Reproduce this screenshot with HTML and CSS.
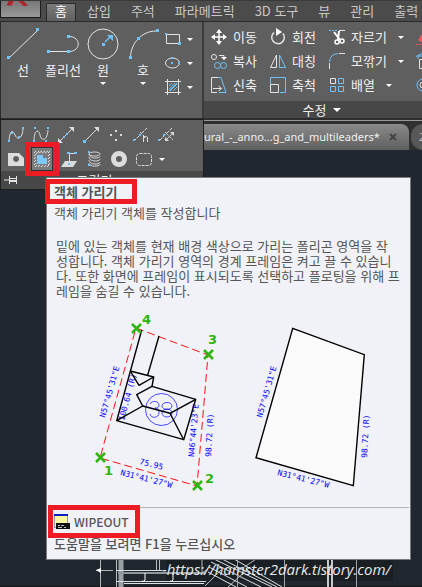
FILE: index.html
```html
<!DOCTYPE html>
<html lang="ko">
<head>
    <meta charset="UTF-8">
    <meta name="viewport" content="width=device-width, initial-scale=1">
    <title>객체 가리기</title>
    <link rel="stylesheet" href="styles.css">
</head>
<body>
    <header class="menu-bar">
        <button class="app-button" aria-label="응용프로그램 메뉴">
            <svg width="40" height="18" viewBox="0 0 40 18">
                <path d="M6 0h6l-2 5H4zM16 0h7l5 5-5 1z" fill="#a3282c"/>
                <path d="M12 0l-2 5M17 0l5 5" stroke="#d8585a" stroke-width="1"/>
            </svg>
        </button>
        <nav class="tabs">
            <a class="tab active" href="#">홈</a>
            <a class="tab" href="#">삽입</a>
            <a class="tab" href="#">주석</a>
            <a class="tab" href="#">파라메트릭</a>
            <a class="tab" href="#">3D 도구</a>
            <a class="tab" href="#">뷰</a>
            <a class="tab" href="#">관리</a>
            <a class="tab" href="#">출력</a>
        </nav>
    </header>

    <section class="ribbon">
        <div class="panel draw-panel">
            <button class="big-tool">
                <svg width="34" height="34" viewBox="0 0 34 34">
                    <path d="M3 31L32 3" stroke="#e4e4e4"/>
                    <path d="M1 29h3v3h-3zM30 1h3v3h-3z" fill="#6fc3fa"/>
                </svg>
                <span>선</span>
            </button>
            <button class="big-tool">
                <svg width="34" height="34" viewBox="0 0 34 34">
                    <path d="M3 24.500h20M24 9.500c11 1 11 14 0 15" stroke="#e4e4e4" fill="none"/>
                    <path d="M1 23h3v3h-3zM21 23h3v3h-3zM21 8h3v3h-3z" fill="#6fc3fa"/>
                </svg>
                <span>폴리선</span>
            </button>
            <button class="big-tool">
                <svg width="34" height="34" viewBox="0 0 34 34">
                    <circle cx="17" cy="17" r="15" stroke="#e4e4e4" fill="none"/>
                    <path d="M19 15l5-5" stroke="#6fc3fa" stroke-width="1.500"/>
                    <path d="M16 16h3v3h-3zM21 8h6v6z" fill="#6fc3fa"/>
                </svg>
                <span>원</span>
                <i class="arrow"></i>
            </button>
            <button class="big-tool">
                <svg width="34" height="34" viewBox="0 0 34 34">
                    <path d="M4.500 30C5 16 16 4 30 4" stroke="#e4e4e4" fill="none"/>
                    <path d="M3 29h3v3h-3zM11 10h3v3h-3zM30 2h3v3h-3z" fill="#6fc3fa"/>
                </svg>
                <span>호</span>
                <i class="arrow"></i>
            </button>
            <div class="small-tools">
                <button class="small-tool" aria-label="직사각형">
                    <svg width="18" height="18" viewBox="0 0 18 18">
                        <path d="M2.500 4.500h13v9h-13z" stroke="#e4e4e4" fill="none"/>
                        <path d="M1 3h2v2H1zM14 12h3v3h-3z" fill="#6fc3fa"/>
                    </svg>
                    <i class="arrow"></i>
                </button>
                <button class="small-tool" aria-label="타원">
                    <svg width="18" height="18" viewBox="0 0 18 18">
                        <ellipse cx="8.500" cy="9" rx="7" ry="5" stroke="#e4e4e4" fill="none"/>
                        <path d="M7 3h2v2H7zM7 8h2v2H7zM14 8h2v2h-2z" fill="#6fc3fa"/>
                    </svg>
                    <i class="arrow"></i>
                </button>
                <button class="small-tool" aria-label="해치">
                    <svg width="18" height="18" viewBox="0 0 18 18">
                        <path d="M1 3.500h16M1 14.500h16M3.500 1v16M14.500 1v16" stroke="#e4e4e4"/>
                        <path d="M5 8l3-3M5 11l6-6M6 13l7-7M9 13l4-4M5 13l8-8" stroke="#6fc3fa"/>
                    </svg>
                    <i class="arrow"></i>
                </button>
            </div>

            <div class="draw-flyout">
                <div class="flyout-row">
                    <button class="fly-tool" aria-label="스플라인 맞춤">
                        <svg width="18" height="18" viewBox="0 0 18 18">
                            <path d="M2 15C3 3 6 4 8 9s7 5 8-6" stroke="#dcdcdc" fill="none"/>
                            <path d="M1 14h2v2H1zM4 6h2v2H4zM11 10h2v2h-2zM15 1h2v2h-2z" fill="#6fc3fa"/>
                        </svg>
                    </button>
                    <button class="fly-tool" aria-label="스플라인 CV">
                        <svg width="18" height="18" viewBox="0 0 18 18">
                            <path d="M2 15C2 3 7 3 8 9s7 7 8-5" stroke="#dcdcdc" fill="none"/>
                            <path d="M1 14h2v2H1zM2 1h2v2H2zM15 1h2v2h-2zM13 14h2v2h-2z" fill="#6fc3fa"/>
                        </svg>
                    </button>
                    <button class="fly-tool" aria-label="구성선">
                        <svg width="18" height="18" viewBox="0 0 18 18">
                            <path d="M2 16L16 2" stroke="#dcdcdc"/>
                            <path d="M1 17v-5l5 5zM17 1v5l-5-5z" fill="#dcdcdc"/>
                            <path d="M6 10h2v2H6zM9 7h2v2H9z" fill="#6fc3fa"/>
                        </svg>
                    </button>
                    <button class="fly-tool" aria-label="광선">
                        <svg width="18" height="18" viewBox="0 0 18 18">
                            <path d="M3 15L16 2" stroke="#dcdcdc"/>
                            <path d="M17 1v5l-5-5z" fill="#dcdcdc"/>
                            <path d="M1 14h3v3H1z" fill="#6fc3fa"/>
                        </svg>
                    </button>
                    <button class="fly-tool" aria-label="다중점">
                        <svg width="18" height="18" viewBox="0 0 18 18">
                            <path d="M8 4h2v2H8zM8 13h2v2H8zM3 8h2v2H3zM13 8h2v2h-2z" fill="#dcdcdc"/>
                        </svg>
                    </button>
                    <button class="fly-tool" aria-label="등분할">
                        <svg width="18" height="18" viewBox="0 0 18 18">
                            <path d="M2 15l5-5M10 7l5-5M8 6l6 6" stroke="#dcdcdc" stroke-dasharray="3 1"/>
                            <path d="M11.500 16v-6M11.500 12q4-3 4 0v4" stroke="#dcdcdc" fill="none"/>
                            <path d="M1 13h2v2H1zM7 8h2v2H7z" fill="#6fc3fa"/>
                        </svg>
                    </button>
                    <button class="fly-tool" aria-label="길이분할">
                        <svg width="18" height="18" viewBox="0 0 18 18">
                            <path d="M2 15L15 2M8 6l8 8M9 14l7-7" stroke="#dcdcdc" stroke-dasharray="4 1"/>
                            <path d="M8 15v-4l4 4zM17 6v4l-4-4z" fill="#dcdcdc"/>
                            <path d="M1 13h2v2H1zM6 8h2v2H6z" fill="#6fc3fa"/>
                        </svg>
                    </button>
                </div>
                <div class="flyout-row">
                    <button class="fly-tool" aria-label="영역">
                        <svg width="18" height="18" viewBox="0 0 18 18">
                            <path fill-rule="evenodd" d="M1 3h11l5 5v8H1zM9 6a3 3 0 1 0 .1 0z" fill="#dcdcdc"/>
                        </svg>
                    </button>
                    <button class="fly-tool wipeout marked" aria-label="객체 가리기">
                        <svg width="18" height="18" viewBox="0 0 18 18">
                            <path d="M1 3l2-2M1 6l5-5M6 3l3-2M9 3l3-2M12 3l3-2M15 3l2-2M1 9l2-2M1 12l2-2M1 15l2-2M15 6l2-2M15 9l2-2M15 12l2-2M15 15l2-2M2 17l2-2M5 17l2-2M8 17l2-2M11 17l2-2M14 17l2-2" stroke="#dcdcdc"/>
                            <path d="M4 5h6v3h4v6H4z" fill="#7cc8fb"/>
                        </svg>
                    </button>
                    <button class="fly-tool" aria-label="3D 폴리선">
                        <svg width="18" height="18" viewBox="0 0 18 18">
                            <path d="M5 11h12l-4 6H1z" fill="#dcdcdc"/>
                            <path d="M9.500 13V3.500h6" stroke="#dcdcdc" fill="none"/>
                            <path d="M7 2h3v2H7zM14 2h3v2h-3zM8 13h2v2H8z" fill="#6fc3fa"/>
                        </svg>
                    </button>
                    <button class="fly-tool" aria-label="나선">
                        <svg width="18" height="18" viewBox="0 0 18 18">
                            <g stroke="#dcdcdc" fill="none">
                                <ellipse cx="9.500" cy="4" rx="5.500" ry="2"/>
                                <path d="M4 4c0 5 11 5 11 2M4 7c0 5 11 5 11 2M4 10c0 5 11 5 11 2M4 13c0 4 11 4 11 1"/>
                            </g>
                            <path d="M3 1h2v2H3zM3 14h2v2H3z" fill="#6fc3fa"/>
                        </svg>
                    </button>
                    <button class="fly-tool" aria-label="도넛">
                        <svg width="18" height="18" viewBox="0 0 18 18">
                            <circle cx="9" cy="9" r="5.500" stroke="#dcdcdc" stroke-width="5" fill="none"/>
                        </svg>
                    </button>
                    <button class="fly-tool" aria-label="구름형 수정기호">
                        <svg width="18" height="18" viewBox="0 0 18 18">
                            <rect x="1.500" y="3.500" width="15" height="12" rx="3" stroke="#dcdcdc" fill="none" stroke-dasharray="3 1"/>
                        </svg>
                    </button>
                    <i class="arrow"></i>
                </div>
                <div class="flyout-title">
                    <svg class="pin" width="14" height="10" viewBox="0 0 14 10">
                        <path d="M0 5h5" stroke="#e4e4e4"/>
                        <path d="M5.500 1v8M12.500 1v8M6 3.500h6M6 6.500h6M6 5.500h6" stroke="#e4e4e4" fill="none"/>
                    </svg>
                    <span>그리기</span>
                </div>
            </div>
        </div>

        <div class="panel modify-panel">
            <div class="modify-grid">
                <button class="tool">
                    <svg width="16" height="18" viewBox="0 0 16 18">
                        <path d="M8 3v12M2 9h12" stroke="#fff" stroke-width="1.500"/>
                        <path d="M8 1l3 4H5zM8 17l3-4H5zM0 9l4-3v6zM16 9l-4-3v6z" fill="#fff"/>
                    </svg>
                    <span>이동</span>
                </button>
                <button class="tool">
                    <svg width="16" height="18" viewBox="0 0 16 18">
                        <path d="M4 4.500a6.300 6.300 0 1 0 9 1" stroke="#e4e4e4" stroke-width="1.500" fill="none"/>
                        <path d="M6 0l6 4-6 4z" fill="#fff"/>
                    </svg>
                    <span>회전</span>
                </button>
                <button class="tool">
                    <svg width="16" height="18" viewBox="0 0 16 18">
                        <path d="M0 2.500h9" stroke="#6fc3fa" stroke-dasharray="2 1"/>
                        <path d="M10 2.500h6" stroke="#e4e4e4"/>
                        <path d="M5 4l6 8M10 3l-1 9" stroke="#fff" stroke-width="2"/>
                        <circle cx="8" cy="14" r="2" stroke="#fff" stroke-width="1.500" fill="none"/>
                        <circle cx="13" cy="13" r="2" stroke="#fff" stroke-width="1.500" fill="none"/>
                    </svg>
                    <span>자르기</span>
                    <i class="arrow"></i>
                </button>
                <button class="tool" aria-label="지우기">
                    <svg width="16" height="18" viewBox="0 0 16 18">
                        <path d="M2 12l6-9h8v8l-6 6z" fill="#f0575c"/>
                        <path d="M0 16.500h8" stroke="#f0575c" stroke-dasharray="2 1"/>
                    </svg>
                </button>

                <button class="tool">
                    <svg width="16" height="18" viewBox="0 0 16 18">
                        <g stroke="#e4e4e4" fill="none"><circle cx="3" cy="5" r="2.500"/><path d="M8 3.500h5v4"/></g>
                        <path d="M10 5h6l-3 3z" fill="#fff"/>
                        <g stroke="#6fc3fa" fill="none"><circle cx="6.500" cy="13.500" r="3"/><circle cx="12.500" cy="13.500" r="3"/></g>
                    </svg>
                    <span>복사</span>
                </button>
                <button class="tool">
                    <svg width="16" height="18" viewBox="0 0 16 18">
                        <path d="M6.500 3v12.500h-6z" stroke="#e4e4e4" fill="none"/>
                        <path d="M9.500 3v12.500h6z" stroke="#6fc3fa" fill="none"/>
                    </svg>
                    <span>대칭</span>
                </button>
                <button class="tool">
                    <svg width="16" height="18" viewBox="0 0 16 18">
                        <path d="M.5 10Q1 2 9 1.500" stroke="#6fc3fa" fill="none"/>
                        <path d="M.5 11v6M10 1.500h6" stroke="#e4e4e4"/>
                    </svg>
                    <span>모깎기</span>
                    <i class="arrow"></i>
                </button>
                <button class="tool" aria-label="분해">
                    <svg width="16" height="18" viewBox="0 0 16 18">
                        <path d="M3.500 7.500h10v9h-10z" stroke="#e4e4e4" fill="none"/>
                        <path d="M0 4.500l6-3M2 7V4h10" stroke="#6fc3fa" fill="none"/>
                    </svg>
                </button>

                <button class="tool">
                    <svg width="16" height="18" viewBox="0 0 16 18">
                        <path d="M7 1.500H.5v15H6M2 12.500h8M7.500 10l3 2.500-3 2.500" stroke="#e4e4e4" fill="none"/>
                        <path d="M7 1.500h3l5 15H8" stroke="#6fc3fa" fill="none"/>
                    </svg>
                    <span>신축</span>
                </button>
                <button class="tool">
                    <svg width="16" height="18" viewBox="0 0 16 18">
                        <path d="M.5 8V1.500h15v15H10" stroke="#6fc3fa" fill="none"/>
                        <path d="M.5 8.500h8v8h-8z" stroke="#e4e4e4" fill="none"/>
                    </svg>
                    <span>축척</span>
                </button>
                <button class="tool">
                    <svg width="16" height="18" viewBox="0 0 16 18">
                        <path d="M1.500 2.500h5v5h-5z" stroke="#e4e4e4" fill="none"/>
                        <path d="M9.500 2.500h5v5h-5zM1.500 10.500h5v5h-5zM9.500 10.500h5v5h-5z" stroke="#6fc3fa" fill="none"/>
                    </svg>
                    <span>배열</span>
                    <i class="arrow"></i>
                </button>
                <button class="tool" aria-label="간격띄우기">
                    <svg width="16" height="18" viewBox="0 0 16 18">
                        <circle cx="7" cy="9" r="6" stroke="#6fc3fa" fill="none"/>
                        <circle cx="7" cy="9" r="3" stroke="#e4e4e4" fill="none"/>
                    </svg>
                </button>
            </div>
            <button class="panel-title"><span>수정</span><i class="arrow wide"></i></button>
        </div>
    </section>

    <div class="file-tabs">
        <div class="file-tab">
            <span class="file-name">ural_-_anno...g_and_multileaders*</span>
            <button class="close" aria-label="닫기">
                <svg width="8" height="8" viewBox="0 0 8 8"><path d="M1 1l6 6M7 1L1 7" stroke="#444" stroke-width="2"/></svg>
            </button>
        </div>
        <a class="file-tab next-tab" href="#">2</a>
    </div>

    <main class="canvas">
        <svg class="drawing" width="422" height="28" viewBox="0 559 422 28">
            <path d="M0 586.500h422" stroke="#12161b"/>
            <path d="M166 559h227v22H166z" fill="#1a1f24"/>
            <path d="M100.500 559v28M96 570.500h17" stroke="#aeb3b7"/>
            <path d="M96 570l5-2v5z" fill="#fff"/>
            <path d="M116.500 559v28M156.500 559v11M159.500 559v11" stroke="#b8bcc0"/>
            <path d="M121 559v28" stroke="#9ba0a5" stroke-width="5"/>
            <path d="M116 570.500h46M116 581.500h90M124 583.500h80" stroke="#dde0e2"/>
            <path d="M118 573h88" stroke="#8e979b" stroke-width="2"/>
            <path d="M145 573v7q-1 2-3 1M173 573v7q-1 2-3 1" stroke="#fff" fill="none"/>
            <path d="M202 559v14l6-4M205 586l16-16M240 570l16-11M228 587l22-20" stroke="#b8bcc0" fill="none"/>
            <path d="M211 562l50 25M214 559l58 28M222 559l55 28M209 567l38 20M208 572l28 15M234 559l48 28" stroke="#dfe2e4"/>
            <path d="M237.500 559v28M284.500 559v28M356.500 559v28" stroke="#9fa4a8"/>
            <path d="M328 559v28M332 559v28" stroke="#c8caca" stroke-width="2"/>
        </svg>
        <span class="watermark">-https://hamster2dark.tistory.com/</span>
    </main>

    <aside class="tooltip" role="tooltip">
        <h1 class="tip-title marked">객체 가리기</h1>
        <p class="tip-summary">객체 가리기 객체를 작성합니다</p>
        <p class="tip-text">밑에 있는 객체를 현재 배경 색상으로 가리는 폴리곤 영역을 작<br>성합니다. 객체 가리기 영역의 경계 프레임은 켜고 끌 수 있습니<br>다. 또한 화면에 프레임이 표시되도록 선택하고 플로팅을 위해 프<br>레임을 숨길 수 있습니다.</p>
        <svg class="figure" viewBox="47 305 363 202">
            <path d="M136 328L208 355 197 486 100 458z" stroke="#f11" stroke-dasharray="8 4" fill="none"/>
            <g stroke="#00f" stroke-width=".7" fill="none">
                <circle cx="161.500" cy="409.500" r="16"/>
                <path d="M150 404c2-4 9-3 9 1s-4 3-4 3 4 0 4 5-8 6-9 1"/>
                <ellipse cx="167" cy="406" rx="5" ry="3.500"/>
                <ellipse cx="167" cy="413" rx="5" ry="4"/>
            </g>
            <g class="survey">
                <text transform="translate(105 418) rotate(-74)">N57°45'31"E</text>
                <text transform="translate(124 421) rotate(-75)">100.64 (R)</text>
                <text transform="translate(194 457) rotate(-85)">N46°44'23"E</text>
                <text transform="translate(211 457) rotate(-87)">98.72 (R)</text>
                <text transform="translate(139 464) rotate(14)">75.95</text>
                <text transform="translate(120 475) rotate(14)">N31°41'27"W</text>
            </g>
            <g stroke="#000" stroke-width="1.400" fill="none" stroke-linejoin="round">
                <path d="M141.700 330L116.700 420.700 183.700 439.700 195.700 399.300 152 386.300 136.700 394.700 142.700 406 116.700 420.700"/>
                <path d="M159 336L147.700 375M130.300 371L153.700 377 152 386.300M130.300 371L139 385.300 153.700 377M142.700 406L170 413.300 195.700 399.300M170 413.300L183.700 439.700"/>
            </g>
            <path d="M132 324l9 9M141 324l-9 9M204 350l9 9M213 350l-9 9M193 481l9 9M202 481l-9 9M96 453l9 9M105 453l-9 9" stroke="#2db60e" stroke-width="2.500"/>
            <g class="corner">
                <text x="142" y="324">4</text>
                <text x="208" y="344">3</text>
                <text x="205" y="483">2</text>
                <text x="104" y="475">1</text>
            </g>
            <path d="M292.700 328.300L364.300 354.700 353.300 485.700 256 457.700z" stroke="#000" stroke-width="1.400" fill="#fafafa"/>
            <g class="survey">
                <text transform="translate(262 418) rotate(-74)">N57°45'31"E</text>
                <text transform="translate(367 458) rotate(-87)">98.72 (R)</text>
                <text transform="translate(277 475) rotate(14)">N31°41'27"W</text>
            </g>
        </svg>
        <div class="tip-footer">
            <div class="command marked">
                <svg width="16" height="16" viewBox="0 0 16 16">
                    <path d="M0 1h14v12H0z" fill="#fbf7a0"/>
                    <path d="M0 0h14v2H0z" fill="#0a22c8"/>
                    <path d="M.5 2v11.500H3M13.500 2v7" stroke="#9a9a9a" fill="none"/>
                    <path d="M2 9h14v6H2z" fill="#111"/>
                    <path d="M4 11.500h2M7 11.500h3M4 13.500h4M10 13.500h2" stroke="#bbb"/>
                </svg>
                <span>WIPEOUT</span>
            </div>
            <p class="help">도움말을 보려면 F1을 누르십시오</p>
        </div>
    </aside>
</body>
</html>
```

FILE: styles.css
```css
* {
    box-sizing: border-box;
}
body {
    margin: 0;
    position: relative;
    display: flex;
    flex-direction: column;
    min-height: 100vh;
    overflow: hidden;
    background-color: #20272f;
    color: #f0f0f0;
    font-family: "Noto Sans CJK KR", sans-serif;
    font-size: 13px;
    line-height: 16px;
}
button {
    margin: 0;
    padding: 0;
    border: none;
    background: none;
    color: inherit;
    font: inherit;
    cursor: pointer;
}
svg {
    display: block;
    flex: none;
}
a {
    color: inherit;
    text-decoration: none;
}
.arrow {
    border: 3px solid transparent;
    border-top-color: #fff;
    border-bottom: none;
}
.arrow.wide {
    border-width: 4px 4px 0;
}

/* menu bar */
.menu-bar {
    display: flex;
    height: 22px;
    background-color: #4b4b4b;
    border-top: 1px solid #3a3a3a;
    border-bottom: 1px solid #2b2b2b;
    white-space: nowrap;
}
.app-button {
    width: 41px;
    height: 17px;
    flex: none;
    border: 1px solid #1c1c1c;
    border-top: none;
    background: linear-gradient(#777, #999);
    overflow: hidden;
}
.app-button svg {
    height: 16px;
}
.tabs {
    display: flex;
    align-items: flex-end;
    padding-left: 5px;
}
.tab {
    height: 18px;
    padding: 0 10px;
    line-height: 16px;
    color: #c8c8c8;
}
.tab.active {
    margin-right: 1px;
    padding: 0 8px;
    border: 1px solid #2b2b2b;
    border-bottom: none;
    border-radius: 2px 2px 0 0;
    background: linear-gradient(#7a7a7a, #606060);
    color: #fff;
    line-height: 14px;
}

/* ribbon */
.ribbon {
    display: flex;
    height: 98px;
    background-color: #5f5f5f;
    border-bottom: 2px solid #2e2e2e;
}
.panel {
    position: relative;
}
.draw-panel {
    display: flex;
    align-items: flex-start;
    width: 204px;
    flex: none;
    padding: 5px 0 0 2px;
    border-left: 1px solid #2b2b2b;
    border-right: 2px solid #3c3c3c;
}
.big-tool {
    display: flex;
    flex-direction: column;
    align-items: center;
    width: 40px;
    flex: none;
}
.big-tool span {
    margin-top: 1px;
}
.big-tool .arrow {
    margin-top: 4px;
}
.small-tools {
    display: flex;
    flex-direction: column;
    margin-left: 1px;
}
.small-tool {
    display: flex;
    align-items: center;
    gap: 5px;
    height: 24px;
}
.draw-flyout {
    position: absolute;
    top: 97px;
    left: -1px;
    width: 204px;
    z-index: 1;
    padding: 3px 0 0;
    border: 1px solid #1f1f1f;
    background-color: #5f5f5f;
}
.flyout-row {
    display: flex;
    align-items: center;
    gap: 6px;
    height: 24px;
    padding-left: 5px;
}
.fly-tool {
    position: relative;
    display: flex;
    justify-content: center;
    width: 19px;
}
.fly-tool.wipeout {
    width: 22px;
    padding: 2px 0;
    border: 1px solid #2f3338;
    background-color: #7b7b7b;
}
.flyout-title {
    display: flex;
    align-items: center;
    height: 18px;
    padding-left: 3px;
    background-color: #474747;
}
.flyout-title span {
    flex: 1;
    padding-right: 32px;
    text-align: center;
}
.modify-panel {
    display: flex;
    flex-direction: column;
    flex: 1;
    min-width: 0;
    padding-top: 3px;
    overflow: hidden;
}
.modify-grid {
    display: grid;
    grid-template-columns: 59px 59px 87px 16px;
    grid-auto-rows: 24px;
    padding-left: 7px;
}
.tool {
    display: flex;
    align-items: center;
    gap: 6px;
    white-space: nowrap;
}
.tool .arrow {
    margin-left: 5px;
}
.panel-title {
    display: flex;
    justify-content: center;
    align-items: center;
    gap: 7px;
    flex: 1;
    margin-top: 4px;
    padding-left: 18px;
    background-color: #474747;
}

/* file tabs */
.file-tabs {
    display: flex;
    gap: 2px;
    height: 30px;
    padding-left: 204px;
    border-top: 1px solid #999;
    background-color: #303030;
    white-space: nowrap;
}
.file-tab {
    display: flex;
    align-items: center;
    gap: 9px;
    height: 26px;
    margin-top: 3px;
    padding-right: 12px;
    border-radius: 0 8px 0 0;
    background: linear-gradient(#8a8a8a, #5f5f5f);
    font-family: "Noto Sans", "Noto Sans CJK KR", sans-serif;
    font-size: 11px;
}
.next-tab {
    flex: 1;
    padding: 0 0 0 8px;
    border-radius: 12px 0 0 12px;
    background: #585858;
    color: #bbb;
}

/* drawing area */
.canvas {
    position: relative;
    display: flex;
    flex: 1;
    align-items: flex-end;
}
.watermark {
    position: absolute;
    left: 162px;
    bottom: 8px;
    color: #e8e8e8;
    font-family: "Open Sans", sans-serif;
    font-size: 15px;
    font-style: italic;
    line-height: 20px;
    white-space: nowrap;
}

/* tooltip */
.tooltip {
    position: absolute;
    top: 177px;
    left: 46px;
    right: 11px;
    z-index: 2;
    border: 1px solid #7b7b7b;
    background-color: #f1f2f8;
    color: #555;
    white-space: nowrap;
}
.tip-title {
    position: relative;
    width: 90px;
    margin: 6px 0 0;
    padding-left: 7px;
    font-size: 13px;
    font-weight: 700;
}
.tip-summary {
    margin: 5px 0 17px;
    padding-left: 7px;
}
.tip-text {
    margin: 0;
    padding-left: 9px;
    line-height: 15px;
}
.figure {
    width: 100%;
    margin-top: 7px;
}
.survey {
    fill: #00f;
    font-family: "DejaVu Sans Mono", monospace;
    font-size: 8px;
}
.corner {
    fill: #2db60e;
    font-family: "DejaVu Sans", sans-serif;
    font-size: 13px;
    font-weight: 700;
}
.tip-footer {
    margin: 0 1px;
    padding: 5px 6px 7px;
    border-top: 1px solid #b5b5b5;
    font-weight: 500;
}
.command {
    position: relative;
    display: flex;
    align-items: center;
    gap: 4px;
    width: 86px;
    height: 18px;
    font-size: 12px;
}
.help {
    margin: 5px 0 0;
}

/* red highlight frames */
.marked::after {
    content: "";
    position: absolute;
    z-index: 1;
    border: 5px solid #ed1c24;
    pointer-events: none;
}
.wipeout.marked::after {
    inset: -6px -7px;
}
.tip-title.marked::after {
    inset: -5px 0 -4px -2px;
}
.command.marked::after {
    inset: -8px 0 -7px -6px;
}
```
